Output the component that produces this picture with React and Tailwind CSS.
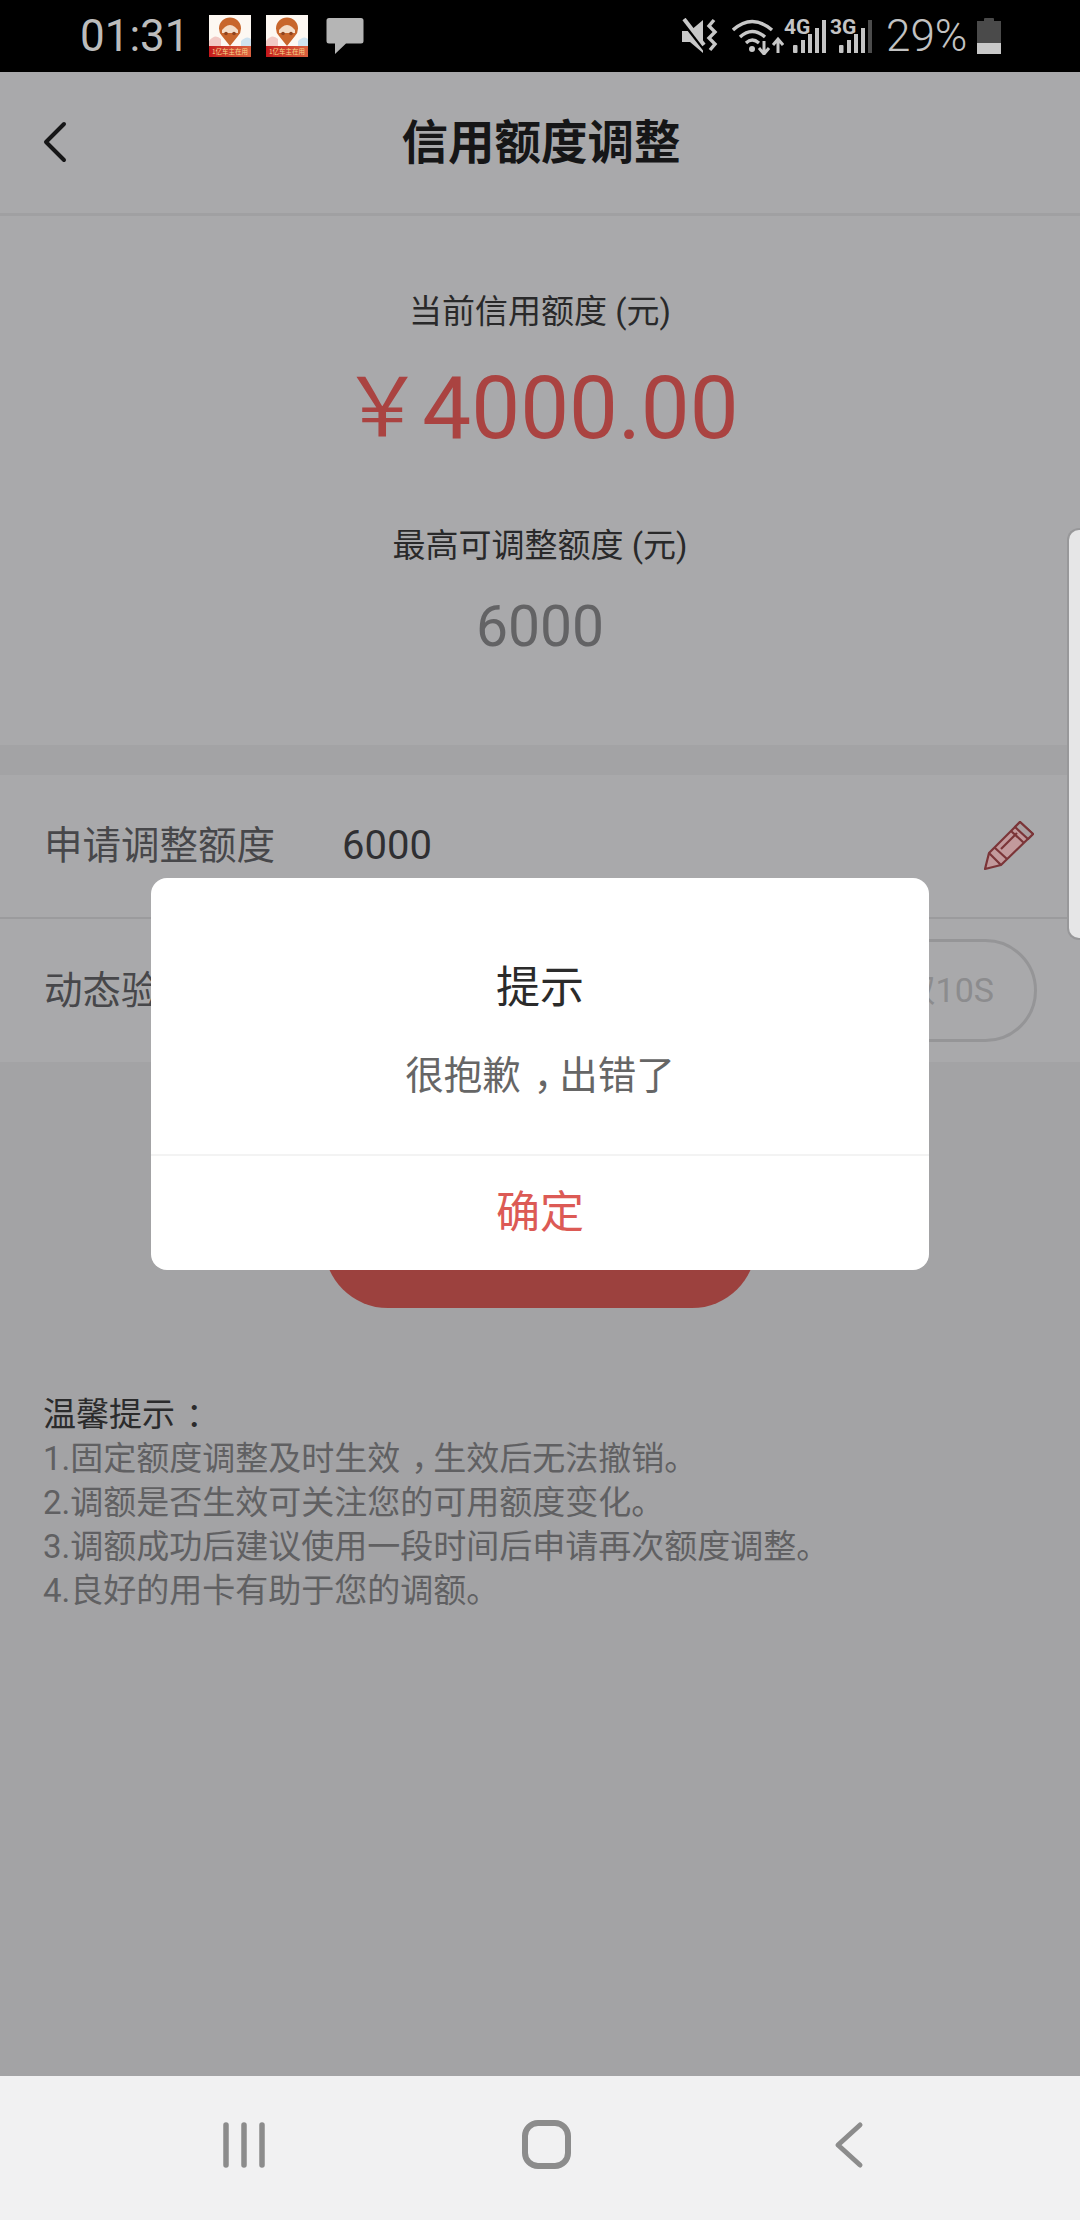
const cjk = "font-['Roboto','Noto_Sans_CJK_SC',sans-serif]";

function AppIcon() {
  return (
    <div className="w-[42px] h-[42px] flex flex-col bg-[#fdf8f2] overflow-hidden">
      <svg width="42" height="31" viewBox="0 0 42 31" className="shrink-0">
        <path d="M0 26 Q6 18 12 24 L12 31 L0 31Z" fill="#f2c9c4" />
        <path d="M32 26 Q38 20 42 24 L42 31 L32 31Z" fill="#cfe3f0" />
        <path d="M21 31 L13 21 A11 11 0 1 1 29 21Z" fill="#c8662c" />
        <path d="M13 15 L16 12 Q21 8 26 12 L29 15 L29 18 L13 18Z" fill="#f3dcc8" />
        <circle cx="17" cy="18.500" r="1.800" fill="#8f4420" />
        <circle cx="25" cy="18.500" r="1.800" fill="#8f4420" />
      </svg>
      <div className="flex-1 bg-gradient-to-r from-[#c4161c] to-[#d9603f] text-[#f7d98c] text-[6.5px] leading-[11px] text-center font-['Noto_Sans_CJK_SC',sans-serif] whitespace-nowrap">
        1亿车主在用
      </div>
    </div>
  );
}

function Signal({ label, dim }) {
  return (
    <svg width="46" height="44" viewBox="0 0 46 44" className="block">
      <text x="0" y="20" fontSize="21" fontWeight="700" fontFamily="Roboto, sans-serif" fill="#c4c4c4">{label}</text>
      <rect x="9" y="31" width="4.500" height="8" rx="1" fill="#c4c4c4" />
      <rect x="17" y="26" width="4" height="13" fill="#c4c4c4" />
      <rect x="24" y="20" width="4" height="19" fill="#c4c4c4" />
      <rect x="31" y="14" width="4" height="25" fill="#c4c4c4" />
      <rect x="38" y="6" width="4" height="33" fill={dim ? "#4c4c4c" : "#c4c4c4"} />
    </svg>
  );
}

function StatusBar() {
  return (
    <div className={`h-[72px] shrink-0 bg-black flex items-center justify-between ${cjk}`}>
      <div className="flex items-center pl-[80px]">
        <span className="text-[44px] leading-[72px] text-[#bcbcbc] w-[129px]">01:31</span>
        <AppIcon />
        <div className="ml-[15px]"><AppIcon /></div>
        <svg width="38" height="38" viewBox="0 0 38 38" className="ml-[18px]">
          <path d="M3 1 H35 A2.500 2.500 0 0 1 37.500 3.500 V24 A2.500 2.500 0 0 1 35 26.500 H20 L9 37 V26.500 H3 A2.500 2.500 0 0 1 0.500 24 V3.500 A2.500 2.500 0 0 1 3 1Z" fill="#b5b5b5" />
        </svg>
      </div>
      <div className="flex items-center pr-[79px]">
        <svg width="38" height="36" viewBox="0 0 38 36">
          <path d="M1 13 H9 L22 2 V35 L9 24 H1Z" fill="#c8c8c8" />
          <path d="M2 3 L24 31" stroke="#000" strokeWidth="5" />
          <path d="M3 1 L23 27" stroke="#c8c8c8" strokeWidth="4" />
          <path d="M33 2 L28 8 L34 14 L28 20 L34 26 L29 32" fill="none" stroke="#c8c8c8" strokeWidth="3.400" />
        </svg>
        <svg width="52" height="38" viewBox="0 0 52 38" className="ml-[13px]">
          <path d="M1 13 Q20 -4 40 13" fill="none" stroke="#c8c8c8" strokeWidth="3.400" />
          <path d="M8 20 Q20 9 33 20" fill="none" stroke="#c8c8c8" strokeWidth="3.400" />
          <path d="M14 26 Q20 20 27 26" fill="none" stroke="#c8c8c8" strokeWidth="3.200" />
          <circle cx="20" cy="32" r="3" fill="#c8c8c8" />
          <path d="M32 24 V37 M27 31 L32 37 L37 31" fill="none" stroke="#c8c8c8" strokeWidth="3" />
          <path d="M46 36 V22 M41 28 L46 22 L51 28" fill="none" stroke="#c8c8c8" strokeWidth="3" />
        </svg>
        <Signal label="4G" />
        <Signal label="3G" dim />
        <span className="text-[44px] leading-[72px] text-[#c2c2c2] ml-[10px] w-[91px] font-light">29%</span>
        <div className="w-[24px] h-[36px] flex flex-col items-center">
          <div className="w-[10px] h-[3px] bg-[#4a4a4a] rounded-t-[1px]" />
          <div className="w-[24px] flex-1 bg-[#4a4a4a] flex flex-col justify-end">
            <div className="h-[11px] bg-[#c8c8c8]" />
          </div>
        </div>
      </div>
    </div>
  );
}

function Header() {
  return (
    <div className="h-[144px] shrink-0 bg-[#a9a9ab] border-b-[3px] border-[#a0a0a2] flex items-center justify-center relative">
      <svg width="24" height="42" viewBox="0 0 24 42" className="absolute left-[43px] top-[49px]">
        <path d="M21 3 L3 21 L21 39" fill="none" stroke="#161617" strokeWidth="4" strokeLinecap="round" strokeLinejoin="round" />
      </svg>
      <h1 className={`pl-[2px] text-[46.5px] leading-[60px] font-bold text-[#161617] ${cjk}`}>信用额度调整</h1>
    </div>
  );
}

function Pencil() {
  return (
    <svg width="50" height="50" viewBox="0 0 50 50">
      <path d="M1 48 L5 32 L36 1 L49 13 L17 44Z" fill="#c29a9c" />
      <path d="M1 48 L5 32 L36 1 L49 13 L17 44Z M5 32 L17 44 M27 10 L40 22 M10.500 26.500 L23 38 M17 28 L33 12" fill="none" stroke="#7b3538" strokeWidth="2.200" strokeLinejoin="round" />
      <path d="M31 6 L44 18 L49 13 L36 1Z" fill="#aaa0a1" stroke="#7b3538" strokeWidth="2.200" strokeLinejoin="round" />
    </svg>
  );
}

// fullwidth punctuation sits centred in the reference font
function Punct({ children }) {
  return <span className="pl-[0.33em] pr-[0.17em] [font-feature-settings:'halt']">{children}</span>;
}

function Tips() {
  return (
    <div className="mt-[85px] pl-[43px] text-[33px] leading-[44px]">
      <p className="text-[#2b2b2c]">温馨提示<Punct>：</Punct></p>
      <p className="text-[#606062]">1.固定额度调整及时生效<Punct>，</Punct>生效后无法撤销。</p>
      <p className="text-[#606062]">2.调额是否生效可关注您的可用额度变化。</p>
      <p className="text-[#606062]">3.调额成功后建议使用一段时间后申请再次额度调整。</p>
      <p className="text-[#606062]">4.良好的用卡有助于您的调额。</p>
    </div>
  );
}

function Dialog() {
  return (
    <div className={`absolute left-[151px] top-[878px] w-[778px] h-[392px] bg-white rounded-[16px] flex flex-col ${cjk}`}>
      <div className="h-[278px] shrink-0 border-b-2 border-[#f3f3f3] flex flex-col items-center">
        <p className="mt-[82px] text-[44px] leading-[56px] text-[#2b2b2b]">提示</p>
        <p className="mt-[35px] text-[38.5px] leading-[50px] text-[#666666]">很抱歉<Punct>，</Punct>出错了</p>
      </div>
      <div className="flex-1 flex items-center justify-center text-[44px] text-[#dc5a55]">确定</div>
    </div>
  );
}

export default function App() {
  return (
    <div className={`w-[1080px] h-[2220px] relative overflow-hidden flex flex-col bg-[#a3a3a5] ${cjk}`}>
      <StatusBar />
      <Header />
      <div className="flex-1 min-h-0">
        <section className="h-[529px] bg-[#a9a9ab] flex flex-col items-center pt-[74px]">
          <p className="text-[33px] leading-[44px] text-[#29292a]">当前信用额度 (元)</p>
          <p className="mt-[24px] text-[87px] leading-[100px] text-[#aa4341] flex items-center">
            <span className="text-[82px] mr-[-1px]">￥</span>4000.00
          </p>
          <p className="mt-[66px] text-[33px] leading-[44px] text-[#29292a]">最高可调整额度 (元)</p>
          <p className="mt-[24px] text-[57px] leading-[70px] text-[#636365]">6000</p>
        </section>
        <section className="mt-[30px] bg-[#a9a9ab]">
          <div className="h-[144px] border-b-2 border-[#9b9b9d] flex items-center pl-[44px] pr-[46px]">
            <span className="w-[298px] text-[38.5px] text-[#47474a]">申请调整额度</span>
            <span className="text-[40px] text-[#2f2f32]">6000</span>
            <div className="ml-auto"><Pencil /></div>
          </div>
          <div className="h-[143px] flex items-center pl-[44px] pr-[43px]">
            <span className="text-[38.5px] text-[#47474a]">动态验证码</span>
            <div className="ml-auto h-[103px] w-[300px] rounded-full border-[3px] border-[#959597] flex items-center justify-end pr-[40px] text-[34px] text-[#8c8c8e]">
              重新获取10S
            </div>
          </div>
        </section>
        <button className="block mx-auto mt-[118px] w-[432px] h-[128px] rounded-full bg-[#9c413e]" />
        <Tips />
      </div>
      <div className="h-[144px] shrink-0 bg-[#f1f1f2] relative flex items-center justify-center">
        <svg width="1080" height="144" viewBox="0 0 1080 144" className="block">
          <path d="M226 49 V89 M244 49 V89 M262 49 V89" stroke="#8c8c8c" strokeWidth="5.500" strokeLinecap="round" />
          <rect x="525" y="47" width="43" height="43" rx="13" fill="none" stroke="#8c8c8c" strokeWidth="6" />
          <path d="M860 49 L838 69 L860 89" fill="none" stroke="#8c8c8c" strokeWidth="5" strokeLinecap="round" strokeLinejoin="round" />
        </svg>
      </div>
      <div className="absolute right-0 top-[528px] w-[13px] h-[412px] bg-[#e6e6e7] border-l-2 border-y-2 border-[#98989a] rounded-l-[12px]" />
      <Dialog />
    </div>
  );
}
